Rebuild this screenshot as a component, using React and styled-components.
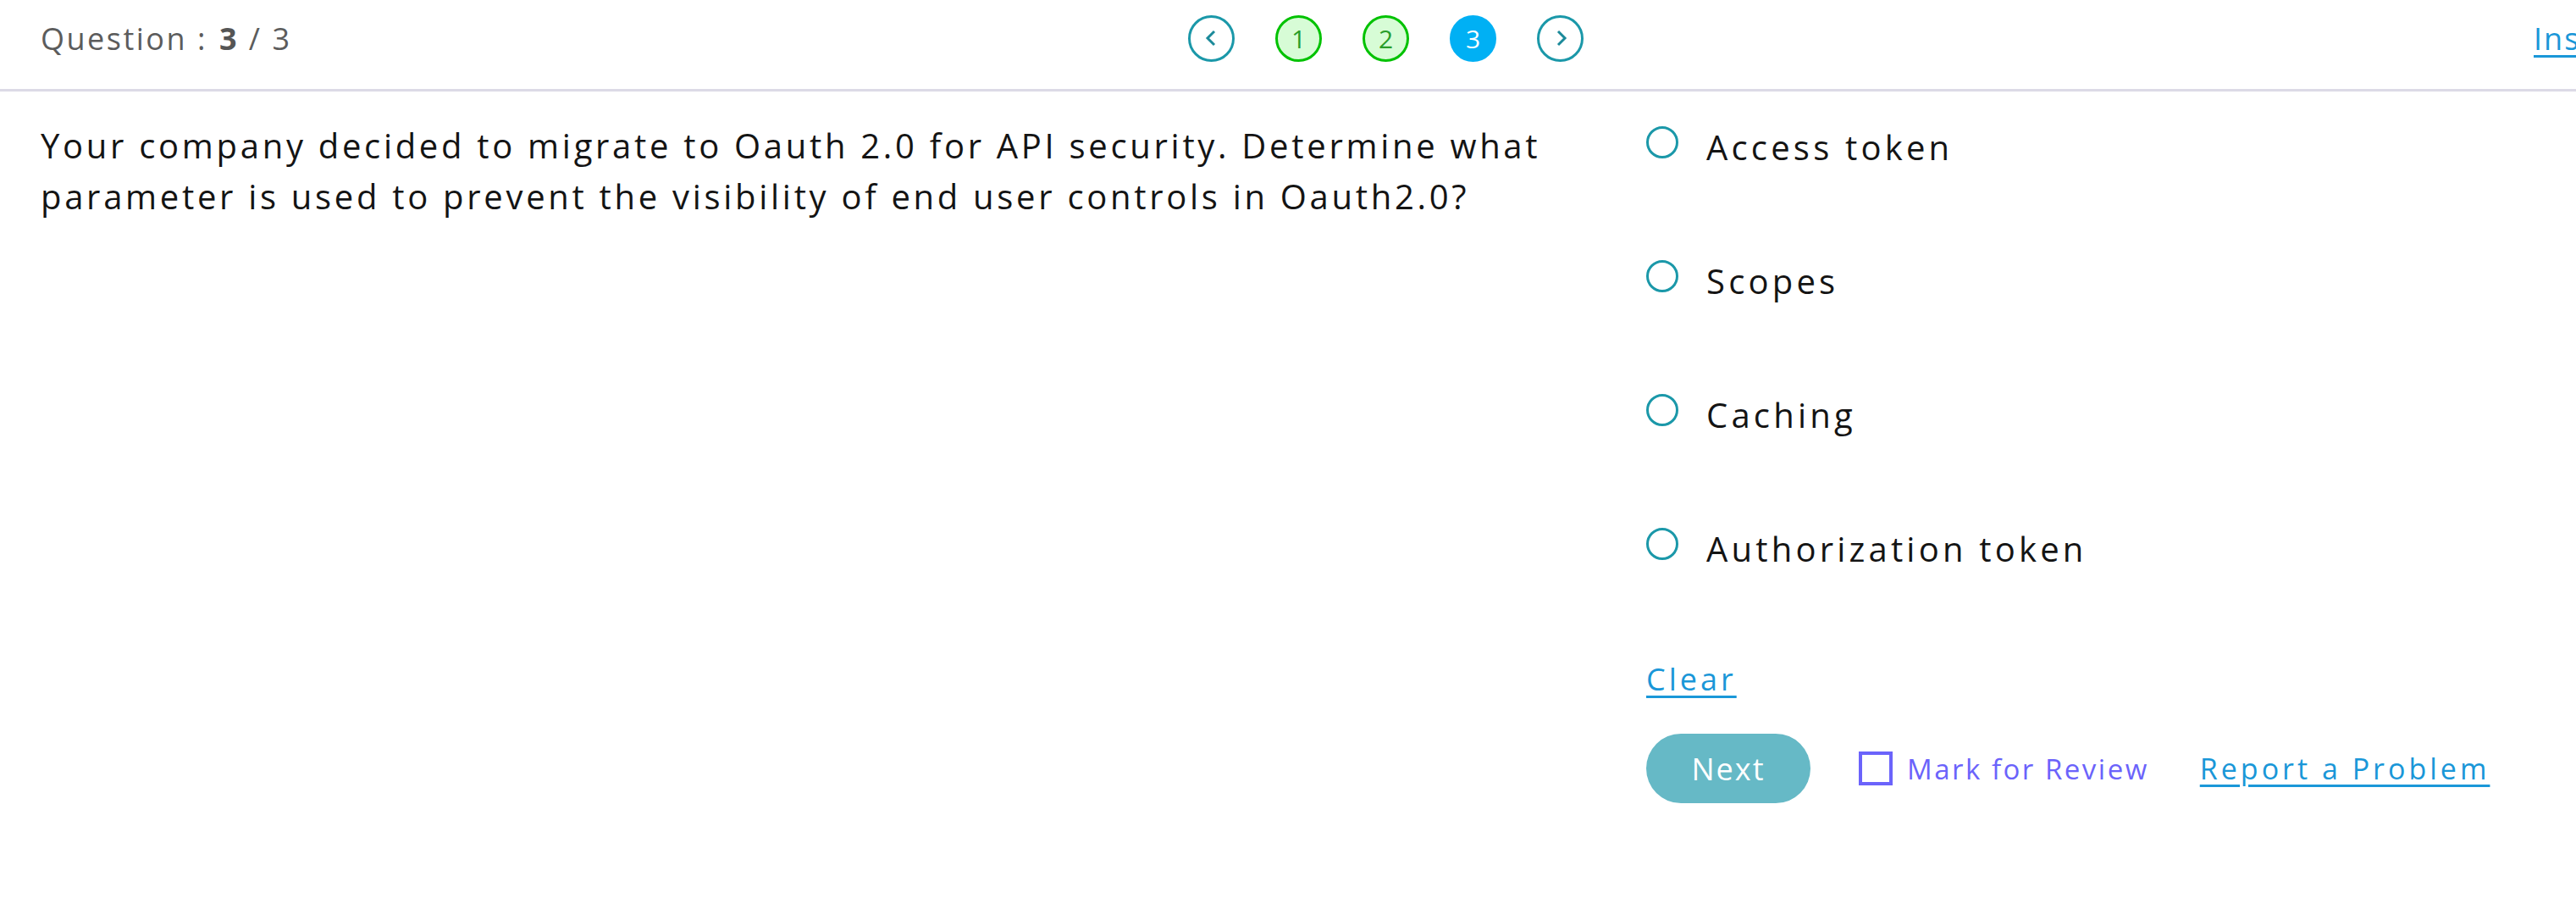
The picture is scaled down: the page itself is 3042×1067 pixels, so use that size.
import React, { useState } from "react";
import styled, { createGlobalStyle } from "styled-components";

const GlobalStyle = createGlobalStyle`
  html, body {
    margin: 0;
    padding: 0;
    background: #ffffff;
    overflow: hidden;
  }
  body {
    font-family: "Open Sans", "Liberation Sans", sans-serif;
    color: #1a1a1a;
  }
`;

const Page = styled.div`
  width: 3042px;
  height: 1067px;
  background: #fff;
`;

const Header = styled.header`
  display: grid;
  grid-template-columns: 1355px auto 1fr;
  align-items: center;
  height: 108px;
  box-sizing: border-box;
  padding: 0 0 15px 48px;
  border-bottom: 3px solid #dcdae6;
  overflow: hidden;
`;

const QuestionCount = styled.div`
  font-size: 36px;
  letter-spacing: 2.5px;
  color: #5c5c5c;
  white-space: nowrap;

  b {
    font-weight: 700;
    color: #555;
    margin-left: 14px;
  }
`;

const Pager = styled.nav`
  display: flex;
  align-items: center;
  gap: 48px;
`;

const PageDot = styled.button`
  width: 55px;
  height: 55px;
  box-sizing: border-box;
  border-radius: 50%;
  padding: 0;
  display: flex;
  align-items: center;
  justify-content: center;
  font-family: inherit;
  font-size: 30px;
  cursor: pointer;
  border: 3px solid
    ${(p) =>
      p.$state === "done" ? "#00c200" : p.$state === "active" ? "#00b0f4" : "#1b98a9"};
  background: ${(p) =>
    p.$state === "done" ? "#d7fcd6" : p.$state === "active" ? "#00b0f4" : "#fff"};
  color: ${(p) =>
    p.$state === "done" ? "#2a9d2a" : p.$state === "active" ? "#fff" : "#1b8a9a"};
`;

const InstructionsLink = styled.a`
  justify-self: start;
  margin-left: 1122px;
  font-size: 36px;
  letter-spacing: 2px;
  color: #1a97d8;
  text-decoration: underline;
  text-underline-offset: 6px;
  white-space: nowrap;
`;

const Main = styled.main`
  display: grid;
  grid-template-columns: 1848px 1fr;
  column-gap: 48px;
  padding: 0 48px;
`;

const QuestionText = styled.p`
  margin: 34px 0 0;
  font-size: 40px;
  line-height: 60px;
  letter-spacing: 3.7px;
  color: #141414;
`;

const Options = styled.div`
  display: flex;
  flex-direction: column;
  padding-top: 41px;
`;

const OptionRow = styled.label`
  display: flex;
  align-items: flex-start;
  gap: 33px;
  height: 158px;
  cursor: pointer;
`;

const Radio = styled.span`
  flex: 0 0 auto;
  width: 38px;
  height: 38px;
  box-sizing: border-box;
  border-radius: 50%;
  border: 3px solid ${(p) => (p.$checked ? "#00b0f4" : "#1b98a9")};
  background: ${(p) => (p.$checked ? "radial-gradient(#1b98a9 40%, #fff 45%)" : "#fff")};
`;

const OptionLabel = styled.span`
  font-size: 40px;
  line-height: 50px;
  letter-spacing: 4.2px;
  color: #141414;
`;

const ClearLink = styled.a`
  align-self: flex-start;
  margin-top: -4px;
  font-size: 36px;
  letter-spacing: 4px;
  color: #1a97d8;
  text-decoration: underline;
  text-underline-offset: 6px;
  cursor: pointer;
`;

const Actions = styled.div`
  display: flex;
  align-items: center;
  margin-top: 40px;
`;

const NextButton = styled.button`
  width: 194px;
  height: 82px;
  border: none;
  border-radius: 41px;
  background: #66b9c6;
  color: #fff;
  font-family: inherit;
  font-size: 36px;
  letter-spacing: 2px;
  cursor: pointer;
`;

const ReviewToggle = styled.label`
  display: flex;
  align-items: center;
  gap: 17px;
  margin-left: 57px;
  font-size: 33px;
  letter-spacing: 2.5px;
  color: #6b63fb;
  cursor: pointer;
`;

const Box = styled.span`
  width: 40px;
  height: 40px;
  box-sizing: border-box;
  border: 4px solid #6b63fb;
  background: ${(p) => (p.$checked ? "#6b63fb" : "#fff")};
`;

const ReportLink = styled.a`
  margin-left: 60px;
  font-size: 34px;
  letter-spacing: 4px;
  color: #1a97d8;
  text-decoration: underline;
  text-underline-offset: 6px;
  cursor: pointer;
`;

const Chevron = ({ dir }) => (
  <svg width="20" height="22" viewBox="0 0 20 22">
    <polyline
      points={dir === "left" ? "13,3 5,11 13,19" : "7,3 15,11 7,19"}
      fill="none"
      stroke="#1b8a9a"
      strokeWidth="3"
      strokeLinejoin="miter"
    />
  </svg>
);

const options = ["Access token", "Scopes", "Caching", "Authorization token"];

export default function App() {
  const [picked, setPicked] = useState(null);
  const [review, setReview] = useState(false);

  return (
    <Page>
      <GlobalStyle />
      <Header>
        <QuestionCount>
          Question :<b>3</b> / 3
        </QuestionCount>
        <Pager>
          <PageDot>
            <Chevron dir="left" />
          </PageDot>
          <PageDot $state="done">1</PageDot>
          <PageDot $state="done">2</PageDot>
          <PageDot $state="active">3</PageDot>
          <PageDot>
            <Chevron dir="right" />
          </PageDot>
        </Pager>
        <InstructionsLink href="#">Instructions</InstructionsLink>
      </Header>

      <Main>
        <QuestionText>
          Your company decided to migrate to Oauth 2.0 for API security. Determine what
          parameter is used to prevent the visibility of end user controls in Oauth2.0?
        </QuestionText>

        <Options>
          {options.map((opt, i) => (
            <OptionRow key={opt} onClick={() => setPicked(i)}>
              <Radio $checked={picked === i} />
              <OptionLabel>{opt}</OptionLabel>
            </OptionRow>
          ))}
          <ClearLink onClick={() => setPicked(null)}>Clear</ClearLink>
          <Actions>
            <NextButton>Next</NextButton>
            <ReviewToggle onClick={() => setReview(!review)}>
              <Box $checked={review} />
              Mark for Review
            </ReviewToggle>
            <ReportLink>Report a Problem</ReportLink>
          </Actions>
        </Options>
      </Main>
    </Page>
  );
}
